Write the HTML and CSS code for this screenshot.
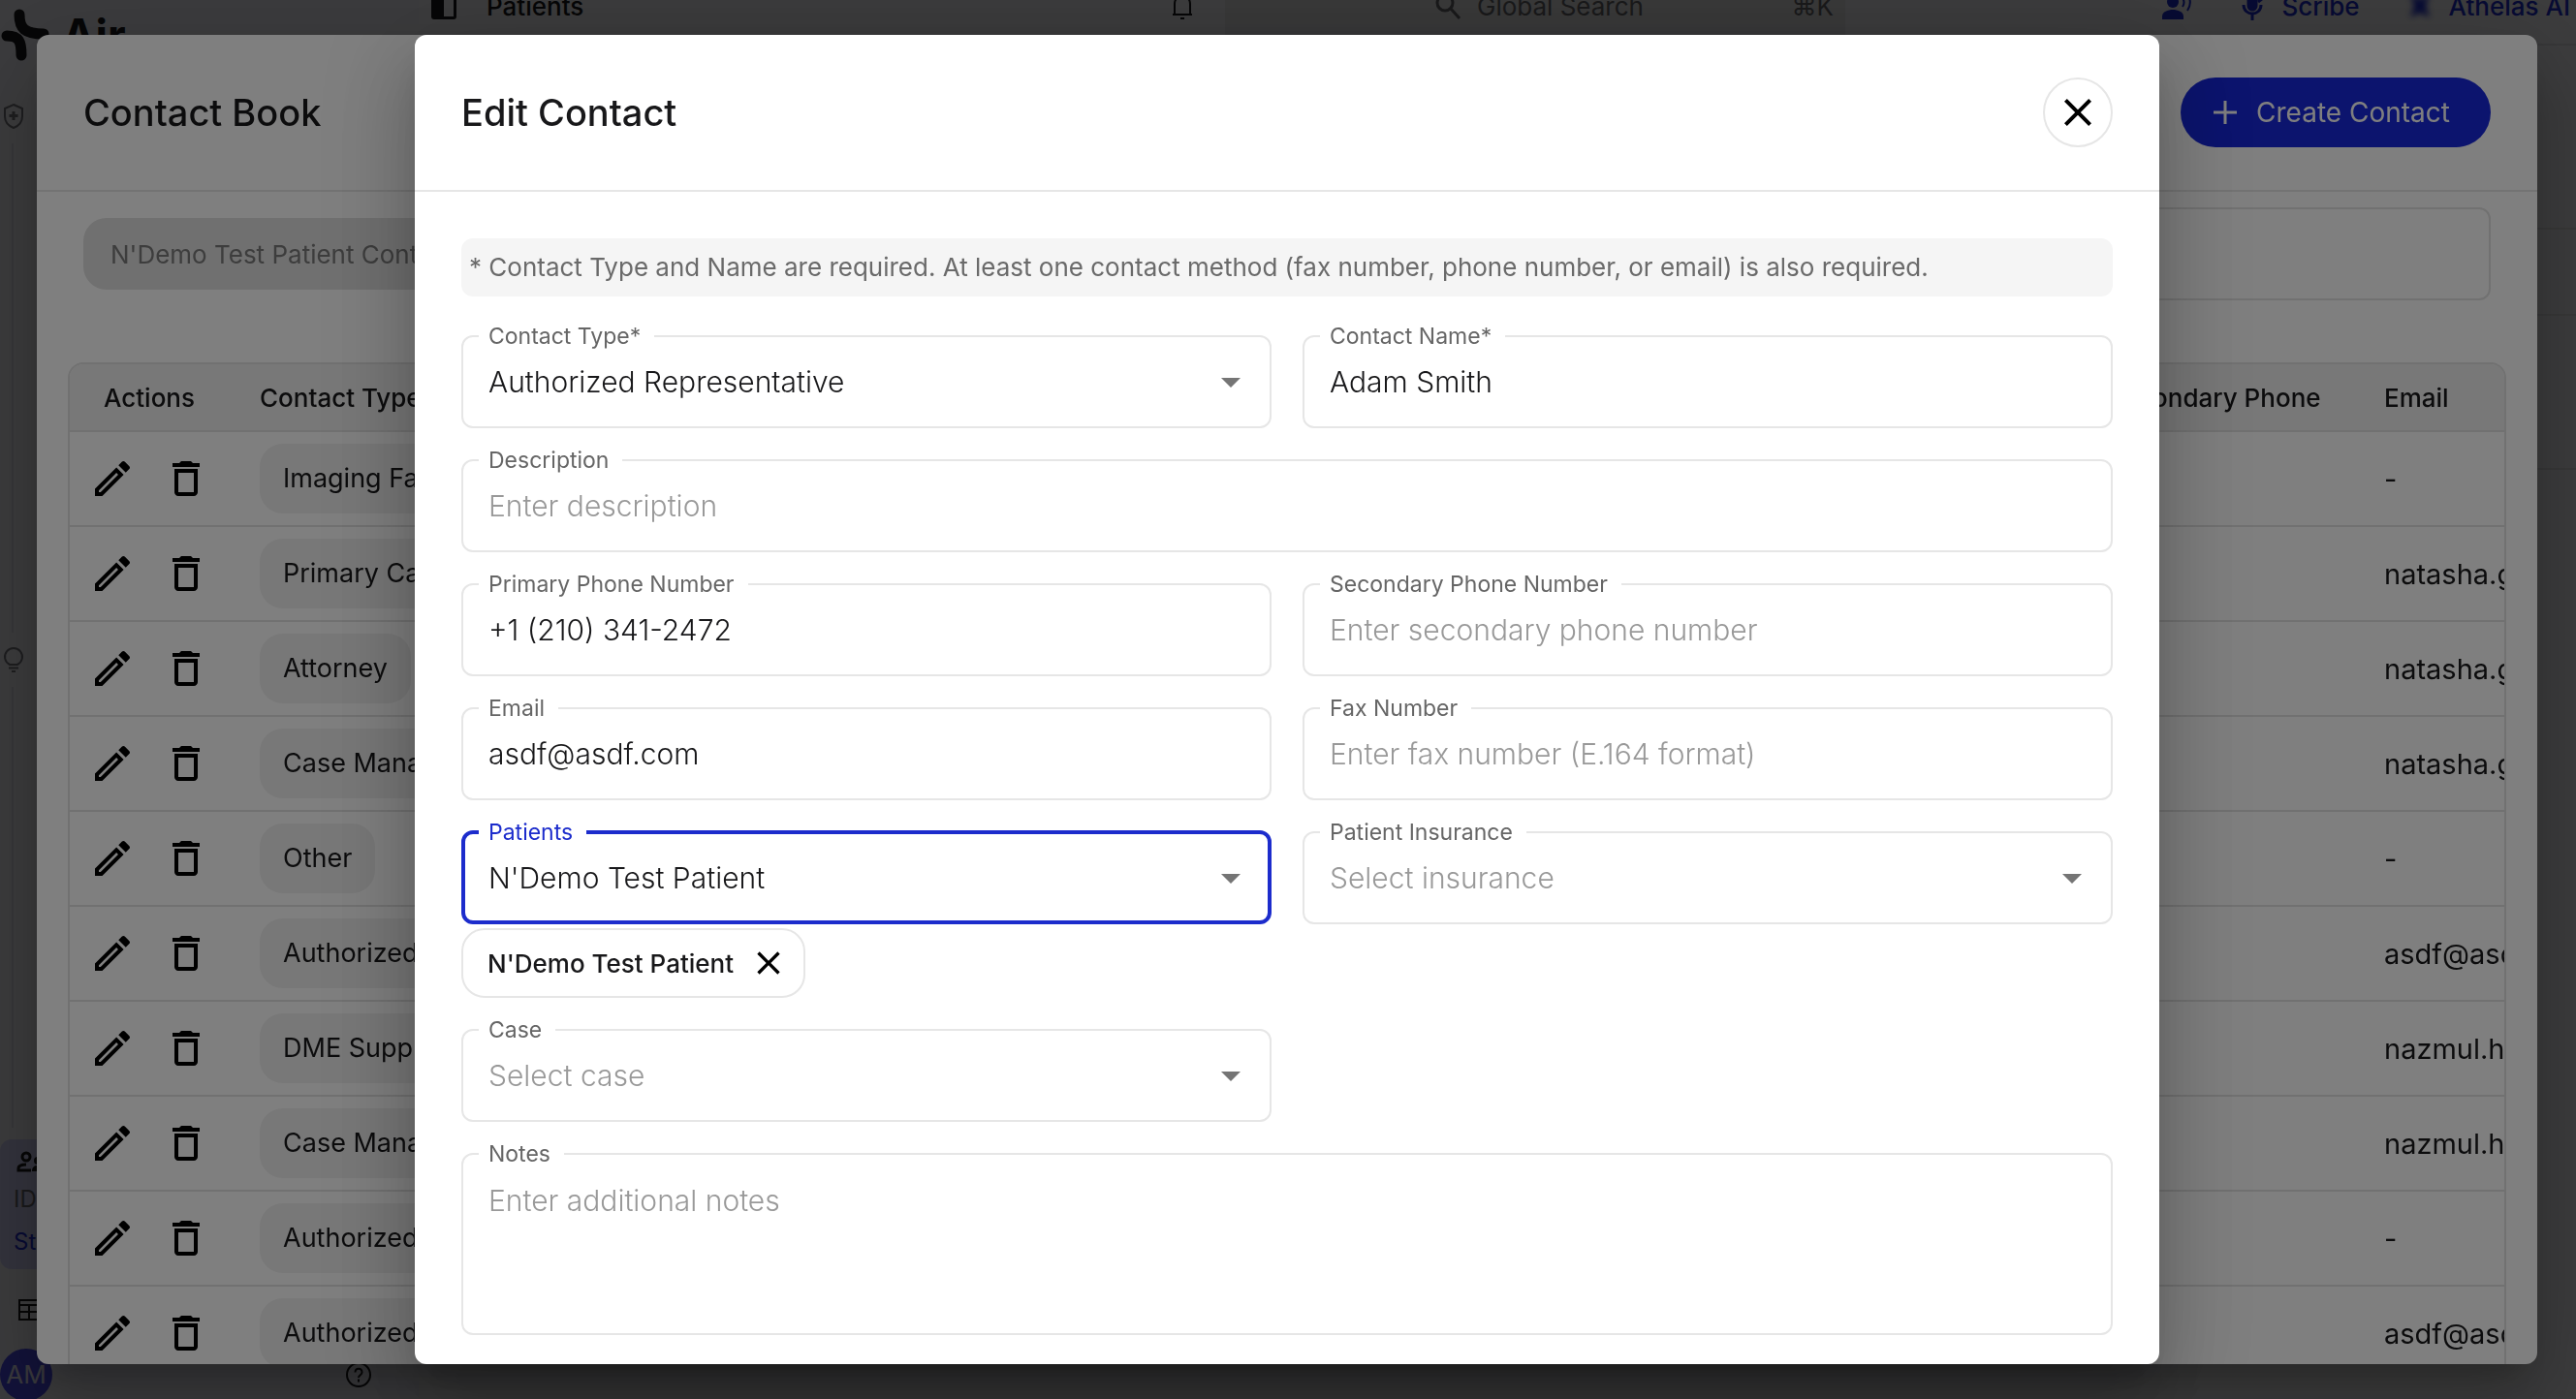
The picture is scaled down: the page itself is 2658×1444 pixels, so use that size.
FILE: index.html
```html
<!DOCTYPE html>
<html lang="en">
<head>
    <meta charset="UTF-8">
    <meta name="viewport" content="width=device-width, initial-scale=1.0">
    <title>Air - Edit Contact</title>
    <link rel="stylesheet" href="styles.css">
</head>
<body>
    <!-- icons used more than once -->
    <svg class="sprite" aria-hidden="true">
        <symbol id="i-edit" viewBox="0 0 24 24"><path d="M14.06 9.02l.92.92L5.92 19H5v-.92l9.06-9.06M17.66 3c-.25 0-.51.1-.7.29l-1.83 1.83 3.75 3.75 1.83-1.83c.39-.39.39-1.02 0-1.41l-2.34-2.34c-.2-.2-.45-.29-.71-.29zm-3.6 3.19L3 17.25V21h3.75L17.81 9.94l-3.75-3.75z"/></symbol>
        <symbol id="i-trash" viewBox="0 0 24 24"><path d="M16 9v10H8V9h8M14.5 3h-5l-1 1H5v2h14V4h-3.500l-1-1zM18 7H6v12c0 1.100.9 2 2 2h8c1.100 0 2-.9 2-2V7z"/></symbol>
        <symbol id="i-close" viewBox="0 0 24 24"><path d="M19 6.41L17.59 5 12 10.59 6.41 5 5 6.410 10.590 12 5 17.590 6.410 19 12 13.410 17.590 19 19 17.590 13.410 12z"/></symbol>
        <symbol id="i-arrow" viewBox="0 0 24 24"><path d="M7 10l5 5 5-5z"/></symbol>
    </svg>

    <!-- APP BEHIND THE DIALOGS -->
    <div class="app">
        <nav class="sidebar">
            <div class="brand">
                <svg class="brand-logo" viewBox="0 0 52 54" fill="none" stroke="currentColor" stroke-width="11" stroke-linecap="round"><path d="M20 6c0 14 5 20 25 20"/><path d="M7 28c13 0 15 6 15 20"/></svg>
                <span>Air</span>
            </div>
            <div class="track">
                <svg class="track-icon" viewBox="0 0 24 28" fill="none" stroke="currentColor" stroke-width="2"><path d="M12 2l9 4v8c0 6-4 10-9 12-5-2-9-6-9-12V6z"/><path d="M12 9v9M7.500 13.500h9" stroke-width="3"/></svg>
                <span class="track-line track-long"></span>
                <svg class="track-icon" viewBox="0 0 24 28" fill="none" stroke="currentColor" stroke-width="2"><path d="M8 19a9 9 0 1 1 8 0zM7 22.500h10M10 26h4"/></svg>
                <span class="track-line"></span>
            </div>
            <div class="side-item">
                <svg class="side-icon" viewBox="0 0 32 24" fill="none" stroke="currentColor" stroke-width="3"><circle cx="13" cy="6" r="4"/><path d="M18 20H5v-2c0-3 4-4 8-4"/><path d="M19 21c0-5 3-6 6-6s6 1 6 6z" fill="currentColor" stroke="none"/><circle cx="25" cy="10" r="4" fill="currentColor" stroke="none"/></svg>
                <span>ID</span>
                <a href="#" class="side-link">Status</a>
            </div>
            <svg class="side-table" viewBox="0 0 24 24" fill="none" stroke="currentColor" stroke-width="2"><path d="M2 2h20v20H2zM2 7h20M2 14h20M12 7v15"/></svg>
            <div class="side-footer">
                <span class="avatar">AM</span>
                <svg class="help" viewBox="0 0 28 28" fill="none" stroke="currentColor" stroke-width="2"><circle cx="14" cy="14" r="12"/><path d="M10.500 11.500c0-5 7-5 7 0 0 2.500-3.500 3-3.500 5.500M14 18.500v3"/></svg>
            </div>
        </nav>
        <div class="main">
            <header class="topbar">
                <div class="topbar-left">
                    <svg class="top-icon" viewBox="0 0 28 32"><path d="M4 2h20a3 3 0 0 1 3 3v22a3 3 0 0 1-3 3H4a3 3 0 0 1-3-3V5a3 3 0 0 1 3-3zm10 3v22h10V5z" fill="currentColor" fill-rule="evenodd"/></svg>
                    <span class="top-title">Patients</span>
                    <svg class="top-icon" viewBox="0 0 28 32" fill="none" stroke="currentColor" stroke-width="2"><path d="M4 25h20M6 25V14c0-11 16-11 16 0v11M12 29h4"/></svg>
                </div>
                <div class="search">
                    <svg class="top-icon" viewBox="0 0 28 32" fill="none" stroke="currentColor" stroke-width="3"><circle cx="11" cy="13" r="8"/><path d="M17 19l9 10"/></svg>
                    <span class="search-text">Global Search</span>
                    <span>⌘K</span>
                </div>
                <div class="topbar-right">
                    <svg class="voice-icon" viewBox="0 0 32 32" fill="currentColor"><circle cx="12" cy="12" r="6"/><path d="M1 30v-3c0-5 6-7 11-7s11 2 11 7v3z"/><path d="M22 8c2 3 2 6 0 9M27 4c4 6 4 11 0 17" fill="none" stroke="currentColor" stroke-width="2"/></svg>
                    <span class="top-action">
                        <svg class="top-icon" viewBox="0 0 28 32" fill="none" stroke="currentColor" stroke-width="3"><path d="M5 15c0 12 18 12 18 0M14 24v7"/><rect x="10" y="4" width="8" height="16" rx="4" fill="currentColor"/><path d="M20 12l5-4"/></svg>
                        Scribe
                    </span>
                    <span class="top-action">
                        <svg class="top-icon spark" viewBox="0 0 28 32" fill="currentColor"><path d="M4 4l10 5 10-5-4 12 4 12-10-5-10 5 4-12z"/></svg>
                        Athelas AI
                    </span>
                </div>
            </header>
            <div class="panel panel-tall"></div>
            <div class="panel"></div>
            <div class="panel panel-mid"></div>
        </div>
    </div>

    <!-- CONTACT BOOK -->
    <div class="backdrop">
        <section class="modal">
            <header class="modal-header">
                <h2>Contact Book</h2>
                <button type="button" class="create-btn">
                    <svg viewBox="0 0 24 24" fill="none" stroke="currentColor" stroke-width="3"><path d="M12 0v24M0 12h24"/></svg>
                    Create Contact
                </button>
            </header>
            <div class="book-tools">
                <button type="button" class="book-tab" disabled>N'Demo Test Patient Contacts</button>
                <input type="search" class="book-search" aria-label="Search contacts">
            </div>
            <div class="table-wrap">
                <table class="contacts">
                    <colgroup><col class="col-actions"><col><col><col><col class="col-phone"><col class="col-email"></colgroup>
                    <thead>
                        <tr><th>Actions</th><th>Contact Type</th><th></th><th></th><th>Secondary Phone</th><th>Email</th></tr>
                    </thead>
                    <tbody id="rows"></tbody>
                </table>
            </div>
        </section>
    </div>

    <!-- EDIT CONTACT -->
    <div class="backdrop">
        <section class="modal modal-edit" role="dialog" aria-labelledby="editTitle">
            <header class="modal-header">
                <h2 id="editTitle">Edit Contact</h2>
                <button type="button" class="close-btn" aria-label="Close"><svg><use href="#i-close"/></svg></button>
            </header>
            <form class="edit-form">
                <p class="notice">* Contact Type and Name are required. At least one contact method (fax number, phone number, or email) is also required.</p>

                <div class="fields">
                    <fieldset class="field">
                        <legend><label for="type">Contact Type*</label></legend>
                        <div class="control">
                            <select id="type"><option>Authorized Representative</option></select>
                            <svg class="arrow"><use href="#i-arrow"/></svg>
                        </div>
                    </fieldset>
                    <fieldset class="field">
                        <legend><label for="name">Contact Name*</label></legend>
                        <div class="control"><input type="text" id="name" value="Adam Smith"></div>
                    </fieldset>
                    <fieldset class="field wide">
                        <legend><label for="description">Description</label></legend>
                        <div class="control"><input type="text" id="description" placeholder="Enter description"></div>
                    </fieldset>
                    <fieldset class="field">
                        <legend><label for="phone">Primary Phone Number</label></legend>
                        <div class="control"><input type="tel" id="phone" value="+1 (210) 341-2472"></div>
                    </fieldset>
                    <fieldset class="field">
                        <legend><label for="phone2">Secondary Phone Number</label></legend>
                        <div class="control"><input type="tel" id="phone2" placeholder="Enter secondary phone number"></div>
                    </fieldset>
                    <fieldset class="field">
                        <legend><label for="email">Email</label></legend>
                        <div class="control"><input type="email" id="email" value="asdf@asdf.com"></div>
                    </fieldset>
                    <fieldset class="field">
                        <legend><label for="fax">Fax Number</label></legend>
                        <div class="control"><input type="tel" id="fax" placeholder="Enter fax number (E.164 format)"></div>
                    </fieldset>
                    <div class="stack">
                        <fieldset class="field active">
                            <legend><label for="patients">Patients</label></legend>
                            <div class="control">
                                <select id="patients"><option>N'Demo Test Patient</option></select>
                                <svg class="arrow"><use href="#i-arrow"/></svg>
                            </div>
                        </fieldset>
                        <div class="patient-chip">
                            N'Demo Test Patient
                            <button type="button" aria-label="Remove patient"><svg><use href="#i-close"/></svg></button>
                        </div>
                    </div>
                    <fieldset class="field">
                        <legend><label for="insurance">Patient Insurance</label></legend>
                        <div class="control">
                            <select id="insurance" class="empty"><option>Select insurance</option></select>
                            <svg class="arrow"><use href="#i-arrow"/></svg>
                        </div>
                    </fieldset>
                    <fieldset class="field first">
                        <legend><label for="case">Case</label></legend>
                        <div class="control">
                            <select id="case" class="empty"><option>Select case</option></select>
                            <svg class="arrow"><use href="#i-arrow"/></svg>
                        </div>
                    </fieldset>
                    <fieldset class="field wide">
                        <legend><label for="notes">Notes</label></legend>
                        <textarea id="notes" placeholder="Enter additional notes"></textarea>
                    </fieldset>
                </div>
            </form>
        </section>
    </div>

    <script src="script.js"></script>
</body>
</html>
```

FILE: styles.css
```css
* {
    box-sizing: border-box;
}

body {
    margin: 0;
    height: 100vh;
    overflow: hidden;
    background-color: #f2f2f4;
    font-family: Inter, "Liberation Sans", sans-serif;
    font-size: 26px;
    color: #18181a;
}

button, input, select, textarea {
    font: inherit;
    color: inherit;
}

.sprite {
    display: none;
}

/******/
/* APP */
/******/

.app {
    display: flex;
    height: 100vh;
    overflow: hidden;
}

.sidebar {
    display: flex;
    flex-direction: column;
    width: 432px;
    background-color: #efeff6;
}

.brand {
    display: flex;
    align-items: center;
    gap: 12px;
    height: 72px;
    font-size: 46px;
    font-weight: 700;
}

.brand-logo {
    width: 52px;
    height: 54px;
}

.track {
    display: flex;
    flex: 1;
    flex-direction: column;
    gap: 14px;
    padding: 34px 0 12px 2px;
    color: #77777c;
}

.track-icon {
    width: 24px;
    height: 28px;
}

.track-line {
    flex: 9;
    width: 2px;
    margin-left: 10px;
    background-color: #dcdce2;
}

.track-long {
    flex: 10;
}

.side-item {
    display: flex;
    flex-direction: column;
    gap: 8px;
    height: 134px;
    padding: 12px 14px;
    border-radius: 12px;
    background-color: #cfcff4;
    font-size: 24px;
    line-height: 36px;
}

.side-item span {
    color: #66666c;
}

.side-icon {
    flex: none;
    width: 32px;
    height: 24px;
}

.side-link {
    color: #1c2ccc;
    text-decoration: none;
}

.side-table {
    width: 24px;
    height: 24px;
    margin: 30px 18px;
}

.side-footer {
    display: flex;
    align-items: center;
    justify-content: space-between;
    height: 50px;
    padding-right: 48px;
}

.avatar {
    width: 54px;
    border-radius: 50%;
    background-color: #4a4ae8;
    color: #e4e4f4;
    line-height: 54px;
    text-align: center;
}

.help {
    width: 28px;
    height: 28px;
}

.main {
    flex: 1;
}

.topbar {
    display: flex;
    height: 80px;
    margin-top: -33px;
    border-bottom: 2px solid #dedee0;
    font-weight: 500;
}

.topbar-left,
.topbar-right,
.search,
.top-action {
    display: flex;
    align-items: center;
}

.topbar-left {
    width: 832px;
    gap: 30px;
    padding: 0 30px 0 12px;
}

.top-title {
    flex: 1;
}

.top-icon {
    width: 28px;
    height: 32px;
}

.search {
    width: 640px;
    gap: 16px;
    padding: 0 12px 0 216px;
    background-color: #e4e4e6;
    color: #66666a;
    font-weight: 400;
}

.search-text {
    flex: 1;
}

.topbar-right {
    flex: 1;
    justify-content: flex-end;
    gap: 48px;
    padding-right: 6px;
    color: #1c2ccc;
}

.top-action {
    gap: 16px;
}

.voice-icon {
    width: 32px;
    height: 32px;
}

.spark {
    filter: blur(3px);
}

.panel {
    height: 89px;
    border-bottom: 2px solid #dedee0;
}

.panel-tall {
    height: 190px;
}

.panel-mid {
    height: 159px;
}

/******/
/* MODAL */
/******/

.backdrop {
    position: fixed;
    inset: 0;
    display: flex;
    justify-content: center;
    padding: 36px 40px 36px 38px;
    background-color: rgba(0, 0, 0, 0.5);
}

.modal {
    width: 100%;
    overflow: hidden;
    border-radius: 12px;
    background-color: #ffffff;
    box-shadow: 0 22px 30px -14px rgba(0, 0, 0, 0.2), 0 48px 76px 6px rgba(0, 0, 0, 0.14), 0 18px 92px 16px rgba(0, 0, 0, 0.12);
}

.modal-edit {
    max-width: 1800px;
}

.modal-header {
    display: flex;
    align-items: center;
    justify-content: space-between;
    height: 162px;
    padding: 0 48px;
    border-bottom: 2px solid #e6e6e6;
}

h2 {
    margin: 0;
    font-size: 38px;
    font-weight: 500;
}

.close-btn {
    display: flex;
    align-items: center;
    justify-content: center;
    width: 72px;
    height: 72px;
    border: 2px solid #e6e6e6;
    border-radius: 50%;
    background: none;
}

.close-btn svg {
    flex: none;
    width: 48px;
    height: 48px;
}

.create-btn {
    display: flex;
    align-items: center;
    gap: 20px;
    height: 72px;
    padding: 0 42px 0 34px;
    border: none;
    border-radius: 36px;
    background-color: #1828dc;
    color: #ffffff;
    font-size: 28px;
}

.create-btn svg {
    width: 24px;
    height: 24px;
}

/******/
/* CONTACT BOOK */
/******/

.book-tools {
    display: flex;
    align-items: center;
    justify-content: space-between;
    padding: 16px 48px 64px;
}

.book-tab {
    height: 74px;
    padding: 0 28px;
    border: none;
    border-radius: 24px;
    background-color: #e0e0e0;
    color: #7a7a7a;
}

.book-search {
    width: 50%;
    height: 96px;
    border: 2px solid #e2e2e2;
    border-radius: 12px;
    background: none;
}

.table-wrap {
    margin: 0 32px;
    overflow: hidden;
    border: 2px solid #e2e2e2;
    border-radius: 16px;
}

/* wider than its frame, the email column runs past the edge */
.contacts {
    width: calc(100% + 240px);
    table-layout: fixed;
    border-collapse: separate;
    border-spacing: 0;
}

.col-actions {
    width: 164px;
}

.col-phone {
    width: 286px;
}

.col-email {
    width: 396px;
}

.contacts th,
.contacts td {
    padding: 0 32px;
    border-bottom: 2px solid #e2e2e2;
    text-align: left;
    white-space: nowrap;
}

.contacts th {
    height: 70px;
    background-color: #f0f0f0;
    font-weight: 500;
}

.contacts td {
    height: 98px;
    font-size: 29px;
}

.contacts th:first-child,
.contacts td:first-child {
    padding: 0;
    text-align: center;
}

.row-actions {
    display: flex;
    justify-content: center;
    gap: 28px;
}

.row-actions button {
    width: 48px;
    height: 48px;
    padding: 0;
    border: none;
    background: none;
}

.row-actions svg {
    display: block;
    width: 48px;
    height: 48px;
}

.type-chip {
    display: inline-block;
    padding: 0 24px;
    border-radius: 24px;
    background-color: #f0f0f0;
    font-size: 27px;
    line-height: 72px;
}

/******/
/* FORM */
/******/

.edit-form {
    padding: 48px 48px 30px;
}

.notice {
    margin: 0 0 27px;
    padding: 0 8px;
    border-radius: 12px;
    background-color: #f5f5f5;
    color: #6a6a6a;
    line-height: 60px;
}

.fields {
    display: grid;
    grid-template-columns: 1fr 1fr;
    gap: 19px 32px;
    align-items: start;
}

.field {
    min-width: 0;
    margin: 0;
    padding: 0 16px;
    border: 2px solid #e6e6e6;
    border-radius: 12px;
}

.wide {
    grid-column: 1 / -1;
}

.first {
    grid-column: 1;
}

legend {
    padding: 0 14px 0 10px;
    color: #666666;
    font-size: 23px;
    line-height: 28px;
}

.control {
    display: flex;
    align-items: center;
    height: 79px;
    padding: 0 0 13px 10px;
}

.control input,
.control select,
textarea {
    flex: 1;
    min-width: 0;
    padding: 0;
    border: none;
    outline: none;
    background: none;
    font-size: 30px;
    font-weight: 300;
}

.control select {
    appearance: none;
}

textarea {
    display: block;
    width: 100%;
    height: 171px;
    padding: 14px 10px;
    line-height: 40px;
    resize: none;
}

.control .empty,
.control input::placeholder,
textarea::placeholder {
    color: #999999;
}

.arrow {
    width: 48px;
    height: 48px;
    fill: #757575;
}

/* focused field: the border grows inwards */
.active {
    padding: 0 14px;
    border-width: 4px;
    border-color: #1c2ccc;
}

.active legend {
    color: #1c2ccc;
}

.active .control {
    height: 77px;
    padding-bottom: 11px;
}

.patient-chip {
    display: inline-flex;
    align-items: center;
    gap: 16px;
    height: 72px;
    margin-top: 4px;
    padding: 0 16px 0 25px;
    border: 2px solid #e6e6e6;
    border-radius: 24px;
    font-weight: 500;
}

.patient-chip button {
    display: flex;
    padding: 0;
    border: none;
    background: none;
}

.patient-chip svg {
    width: 40px;
    height: 40px;
}
```

FILE: script.js
```javascript
const contacts = [
    ["Imaging Facility", "-"],
    ["Primary Care Provider", "natasha.g@asdf.com"],
    ["Attorney", "natasha.g@asdf.com"],
    ["Case Manager", "natasha.g@asdf.com"],
    ["Other", "-"],
    ["Authorized Representative", "asdf@asdf.com"],
    ["DME Supplier", "nazmul.h@asdf.com"],
    ["Case Manager", "nazmul.h@asdf.com"],
    ["Authorized Representative", "-"],
    ["Authorized Representative", "asdf@asdf.com"]
];

document.getElementById("rows").innerHTML = contacts.map(([type, email]) => `
    <tr>
        <td>
            <div class="row-actions">
                <button type="button" aria-label="Edit"><svg><use href="#i-edit"/></svg></button>
                <button type="button" aria-label="Delete"><svg><use href="#i-trash"/></svg></button>
            </div>
        </td>
        <td><span class="type-chip">${type}</span></td>
        <td></td><td></td><td></td>
        <td>${email}</td>
    </tr>`).join("");
```
